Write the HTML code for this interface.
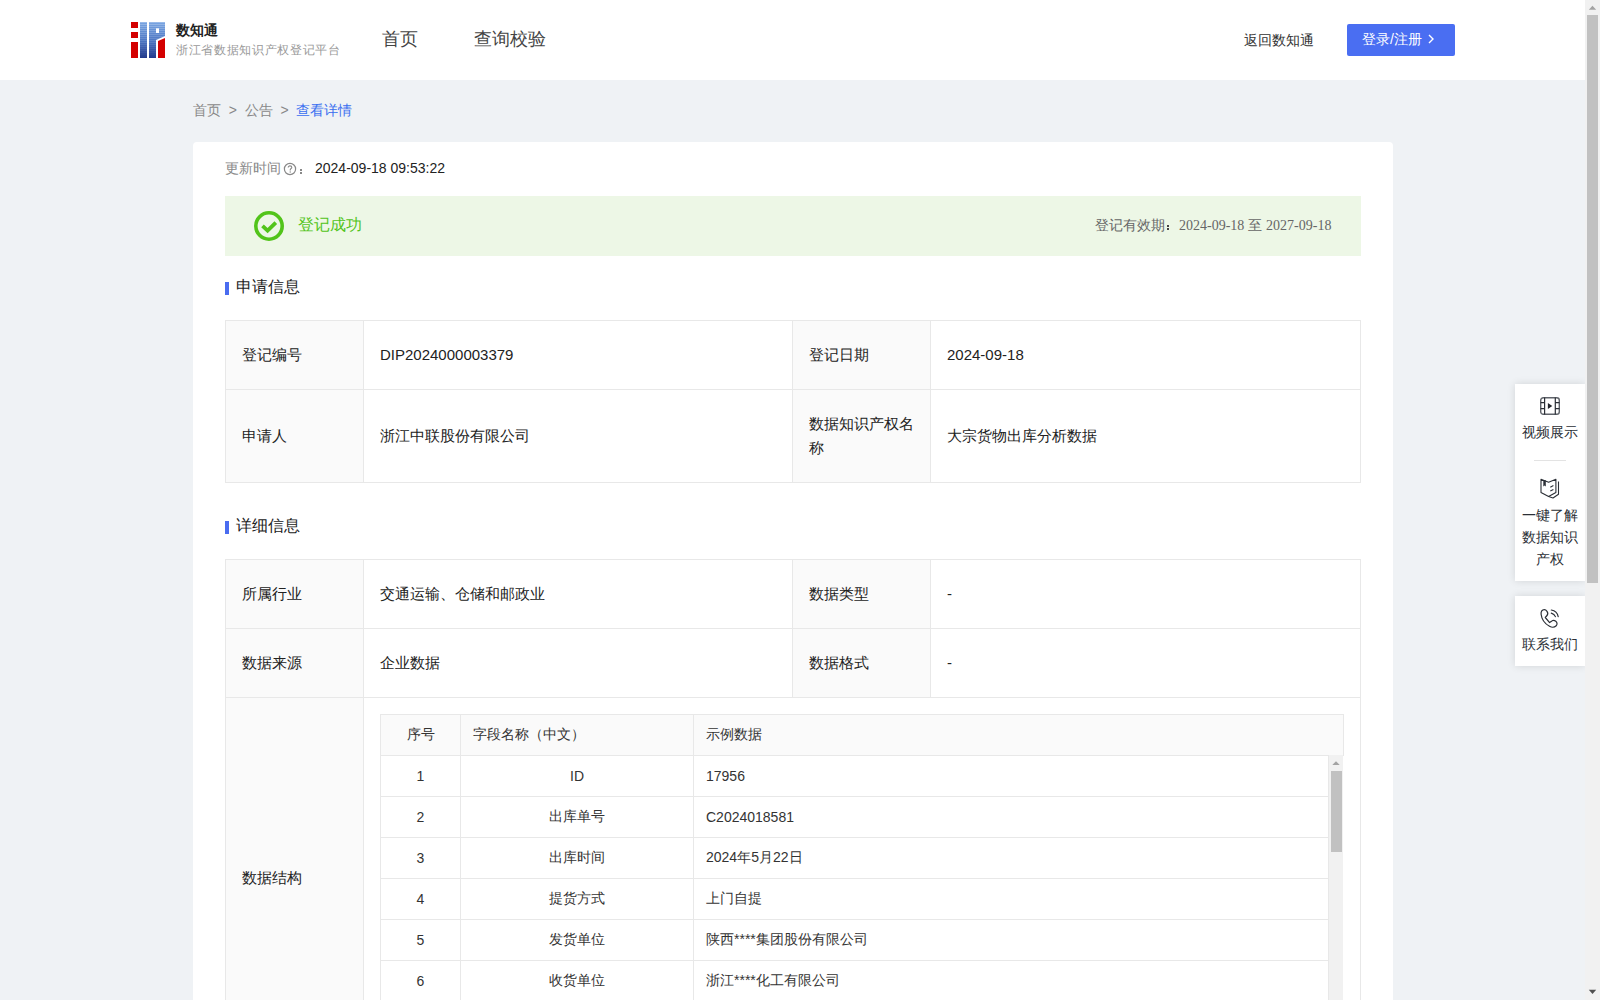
<!DOCTYPE html>
<html><head><meta charset="utf-8">
<style>
*{box-sizing:border-box;margin:0;padding:0}
html,body{width:1600px;height:1000px;overflow:hidden}
body{font-family:"Liberation Sans",sans-serif;background:#eff2f5;position:relative;color:#333;font-size:14px}
.abs{position:absolute;white-space:nowrap}
#hdr{position:absolute;left:0;top:0;width:1585px;height:80px;background:#fff}
.card{position:absolute;left:193px;top:142px;width:1200px;height:900px;background:#fff;border-radius:4px}
table.t{position:absolute;border-collapse:collapse;table-layout:fixed}
table.t td{border:1px solid #e8e8e8;font-size:15px;color:#222;padding:0 16px;vertical-align:middle;line-height:24px}
table.t td.l{background:#fafafa}
.sec{position:absolute;left:236px;font-size:16px;color:#222;line-height:20px}
.sec:before{content:"";position:absolute;left:-11px;top:5px;width:4px;height:13px;background:#4a6cf0}
table.n{position:absolute;border-collapse:collapse;table-layout:fixed}
table.n td{border:1px solid #e8e8e8;height:41px;font-size:14px;color:#333;padding:0 12px;vertical-align:middle}
table.n tr.h td{background:#fafafa}
.c{text-align:center}
.fp{position:absolute;left:1515px;width:70px;background:#fff;box-shadow:0 0 8px rgba(0,0,0,0.12)}
.fp .tx{position:absolute;left:0;width:70px;text-align:center;font-size:14px;color:#2b2f36;line-height:22px;white-space:normal}
.sbt{position:absolute;background:#f1f1f1}
.thumb{position:absolute;background:#c1c1c1}
</style></head><body>
<div id="hdr">
  <svg class="abs" style="left:131px;top:22px" width="35" height="36" viewBox="0 0 35 36">
    <defs>
      <linearGradient id="bg" x1="0" y1="0" x2="0" y2="1">
        <stop offset="0" stop-color="#7aa6e2"/>
        <stop offset="0.5" stop-color="#4f78c4"/>
        <stop offset="1" stop-color="#233a8c"/>
      </linearGradient>
      <pattern id="st" width="4" height="2" patternUnits="userSpaceOnUse"><rect x="0" y="0" width="4" height="0.7" fill="#fff" fill-opacity="0.35"/></pattern>
      <linearGradient id="fd" x1="0" y1="0" x2="0" y2="1"><stop offset="0" stop-color="#fff"/><stop offset="1" stop-color="#000"/></linearGradient>
      <mask id="mk"><rect x="0" y="0" width="35" height="36" fill="url(#fd)"/></mask>
    </defs>
    <rect x="0" y="0" width="7" height="6" fill="#d40000"/>
    <rect x="0" y="10" width="7" height="6" fill="#d40000"/>
    <rect x="0" y="20" width="7" height="16" fill="#d40000"/>
    <rect x="9" y="0" width="7" height="36" fill="url(#bg)"/>
    <path d="M18 0H34V14L25 18V36H18Z M25 6.2V11.1H28V6.2Z" fill="url(#bg)" fill-rule="evenodd"/>
    <g mask="url(#mk)"><rect x="9" y="0" width="7" height="36" fill="url(#st)"/><path d="M18 0H34V14L25 18V36H18Z M25 6.2V11.1H28V6.2Z" fill="url(#st)" fill-rule="evenodd"/></g>
    <path d="M27 19L34 16V36H27Z" fill="#d40000"/>
  </svg>
  <div class="abs" style="left:176px;top:22px;font-size:14px;font-weight:bold;color:#222;line-height:16px">数知通</div>
  <div class="abs" style="left:176px;top:43px;font-size:12px;letter-spacing:0.67px;color:#999;line-height:14px">浙江省数据知识产权登记平台</div>
  <div class="abs" style="left:382px;top:29px;font-size:18px;color:#444;line-height:20px">首页</div>
  <div class="abs" style="left:474px;top:29px;font-size:18px;color:#444;line-height:20px">查询校验</div>
  <div class="abs" style="left:1244px;top:32px;font-size:14px;color:#333;line-height:16px">返回数知通</div>
  <div class="abs" style="left:1347px;top:24px;width:108px;height:32px;background:#4a6ef2;border-radius:2px;color:#fff;font-size:14px;line-height:31px;padding-left:15px">登录/注册
    <svg style="position:absolute;left:79.6px;top:10px" width="8" height="10" viewBox="0 0 8 10"><path d="M2 1L6 5L2 9" fill="none" stroke="#fff" stroke-width="1.4"/></svg>
  </div>
</div>

<div class="abs" style="left:193px;top:102px;font-size:14px;color:#888;line-height:16px">首页 &nbsp;&gt;&nbsp; 公告 &nbsp;&gt;&nbsp; <span style="color:#3a6ff0">查看详情</span></div>
<div class="card"></div>
<div class="abs" style="left:225px;top:160px;font-size:14px;color:#888;line-height:16px">更新时间</div>
<svg class="abs" style="left:283px;top:162px" width="14" height="14" viewBox="0 0 14 14"><circle cx="7" cy="7" r="5.6" fill="none" stroke="#888" stroke-width="1.2"/><path d="M5.2 5.6C5.2 4.5 6 3.9 7 3.9C8 3.9 8.8 4.5 8.8 5.4C8.8 6.4 7.2 6.6 7.2 7.9V8.4" fill="none" stroke="#888" stroke-width="1.1"/><circle cx="7.2" cy="10" r="0.7" fill="#888"/></svg>
<div class="abs" style="left:300px;top:169.2px;width:2px;height:1.8px;background:#888"></div><div class="abs" style="left:300px;top:172.2px;width:2px;height:1.8px;background:#888"></div>
<div class="abs" style="left:315px;top:160px;font-size:14px;color:#222;line-height:16px">2024-09-18 09:53:22</div>

<div class="abs" style="left:225px;top:196px;width:1136px;height:60px;background:#edf7e6"></div>
<svg class="abs" style="left:252px;top:209px" width="34" height="34" viewBox="0 0 34 34"><circle cx="17" cy="17" r="13.2" fill="none" stroke="#52c41a" stroke-width="3.6"/><path d="M10.5 16.8L15.6 21.6L23.8 13.6" fill="none" stroke="#52c41a" stroke-width="3.8"/></svg>
<div class="abs" style="left:298px;top:215px;font-size:16px;color:#52c41a;line-height:20px">登记成功</div>
<div class="abs" style="left:1095px;top:217px;font-size:14px;color:#666;line-height:16px">登记有效期<span style="display:inline-block;width:14px;height:0;position:relative"><i style="position:absolute;left:2px;top:-5px;width:2.2px;height:1.9px;background:#444"></i><i style="position:absolute;left:2px;top:-2px;width:2.2px;height:1.9px;background:#444"></i></span><span style="font-family:'Liberation Serif',serif">2024-09-18</span> 至 <span style="font-family:'Liberation Serif',serif">2027-09-18</span></div>

<div class="sec" style="top:277px">申请信息</div>
<table class="t" style="left:225px;top:320px;width:1136px">
<colgroup><col style="width:138px"><col style="width:429px"><col style="width:138px"><col></colgroup>
<tr style="height:69px"><td class="l">登记编号</td><td>DIP2024000003379</td><td class="l">登记日期</td><td>2024-09-18</td></tr>
<tr style="height:93px"><td class="l">申请人</td><td>浙江中联股份有限公司</td><td class="l">数据知识产权名称</td><td>大宗货物出库分析数据</td></tr>
</table>

<div class="sec" style="top:516px">详细信息</div>
<table class="t" style="left:225px;top:559px;width:1136px">
<colgroup><col style="width:138px"><col style="width:429px"><col style="width:138px"><col></colgroup>
<tr style="height:69px"><td class="l">所属行业</td><td>交通运输、仓储和邮政业</td><td class="l">数据类型</td><td>-</td></tr>
<tr style="height:69px"><td class="l">数据来源</td><td>企业数据</td><td class="l">数据格式</td><td>-</td></tr>
<tr style="height:361px"><td class="l">数据结构</td><td colspan="3"></td></tr>
</table>

<table class="n" style="left:380px;top:714px;width:964px">
<colgroup><col style="width:80px"><col style="width:233px"><col></colgroup>
<tr class="h"><td class="c">序号</td><td style="padding-left:12px">字段名称（中文）</td><td>示例数据</td></tr>
</table>
<div class="abs" style="left:380px;top:755px;width:949px;height:300px;overflow:hidden">
<table class="n" style="left:0;top:0;width:949px">
<colgroup><col style="width:80px"><col style="width:233px"><col></colgroup>
<tr><td class="c">1</td><td class="c">ID</td><td>17956</td></tr>
<tr><td class="c">2</td><td class="c">出库单号</td><td>C2024018581</td></tr>
<tr><td class="c">3</td><td class="c">出库时间</td><td>2024年5月22日</td></tr>
<tr><td class="c">4</td><td class="c">提货方式</td><td>上门自提</td></tr>
<tr><td class="c">5</td><td class="c">发货单位</td><td>陕西****集团股份有限公司</td></tr>
<tr><td class="c">6</td><td class="c">收货单位</td><td>浙江****化工有限公司</td></tr>
<tr><td class="c">7</td><td class="c">货物名称</td><td>甲醇</td></tr>
</table>
</div>
<!-- inner scrollbar -->
<div class="sbt" style="left:1328px;top:755px;width:15px;height:300px;border-left:1px solid #e8e8e8"></div>
<svg class="abs" style="left:1331px;top:760px" width="10" height="6" viewBox="0 0 10 6"><path d="M1.3 5L5 1.2L8.7 5Z" fill="#a3a3a3"/></svg>
<div class="thumb" style="left:1331px;top:771px;width:11px;height:81px"></div>

<!-- floating panel -->
<div class="fp" style="top:384px;height:197px">
  <svg class="abs" style="left:25px;top:13px" width="20" height="18" viewBox="0 0 20 18"><rect x="0.7" y="0.7" width="18.6" height="16.6" rx="2.6" fill="none" stroke="#5f636a" stroke-width="1.4"/><path d="M4.6 0.6V17.4M15.3 0.6V17.4M0.6 5.6H4.6M0.6 11.7H4.6M15.3 5.6H19.4M15.3 11.7H19.4" stroke="#2b2f36" stroke-width="1.2" fill="none"/><path d="M7.9 5.9L12.3 9L7.9 12.1Z" fill="#23262c"/></svg>
  <div class="tx" style="top:37px">视频展示</div>
  <div class="abs" style="left:19px;top:76px;width:32px;height:1px;background:#e3e3e3"></div>
  <svg class="abs" style="left:21px;top:90px" width="28" height="28" viewBox="0 0 28 28"><g fill="none" stroke="#2b2f36" stroke-width="1.1" stroke-linejoin="round"><path d="M5 5.3L12.6 8.3L19.9 5.3V18.5L12.6 22.5L5 18.5Z"/><path d="M22.5 7.6V20.3L17 24L12.6 22.5"/><path d="M14.3 13.2L17.4 11.5M14.3 17L17.4 15.4"/></g><path d="M7.3 6.2H9.8V12.6L8.55 11.4L7.3 12.6Z" fill="#2b2f36"/></svg>
  <div class="tx" style="top:120px">一键了解<br>数据知识<br>产权</div>
</div>
<div class="fp" style="top:596px;height:70px">
  <svg class="abs" style="left:21px;top:8px" width="28" height="28" viewBox="0 0 28 28"><g fill="none" stroke="#2b2f36" stroke-width="1.2" stroke-linecap="round" stroke-linejoin="round"><path d="M8.3 5.6C6 5.6 4.8 7.5 5.1 10.2C5.6 14.5 8.5 19.5 13.5 22.3C15.5 23.4 18.3 23.6 20.2 21.8C21.5 20.5 21.2 18.3 19.8 17.2C18.4 16.1 17 16 15.9 16.9L13.6 18.6L9.3 13.5L11 11.5C11.9 10.4 11.9 8.6 11 7.3C10.3 6.3 9.4 5.6 8.3 5.6Z"/><path d="M15.3 9.1C17.2 9.6 18.8 11 19.4 12.6"/><path d="M15.3 6C18.7 6.6 21.5 9.1 22.2 12.6"/></g></svg>
  <div class="tx" style="top:37px">联系我们</div>
</div>

<!-- page scrollbar -->
<div class="sbt" style="left:1585px;top:0;width:15px;height:1000px"></div>
<svg class="abs" style="left:1585px;top:0" width="15" height="15" viewBox="0 0 15 15"><path d="M3.8 9.8L7.5 5.8L11.2 9.8Z" fill="#a3a3a3"/></svg>
<div class="thumb" style="left:1587px;top:15px;width:11px;height:568px"></div>
<svg class="abs" style="left:1585px;top:985px" width="15" height="15" viewBox="0 0 15 15"><path d="M3.8 4.8L7.5 9L11.2 4.8Z" fill="#505050"/></svg>
</body></html>
